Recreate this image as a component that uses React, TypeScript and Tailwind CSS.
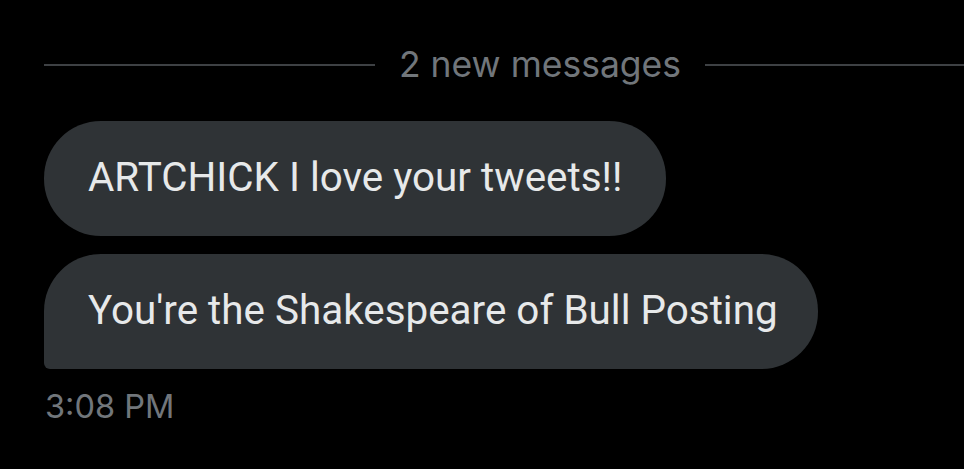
export default function App() {
  return (
    <div className="w-[964px] h-[469px] bg-black overflow-hidden" style={{ fontFamily: "Roboto, 'Liberation Sans', sans-serif" }}>
      <div className="flex items-center ml-[44px] w-[992px] pt-[42px] h-[46px] box-content">
        <div className="flex-1 h-[2px] bg-[#3e4144]" />
        <div className="px-[24px] text-[35.5px] leading-[46px] text-[#71767b] font-['Inter',sans-serif]">2 new messages</div>
        <div className="flex-1 h-[2px] bg-[#3e4144]" />
      </div>
      <div className="flex flex-col items-start pl-[44px] pt-[33px] gap-[18px]">
        <div className="h-[115px] flex items-center px-[44px] bg-[#2f3336] rounded-[57px] text-[#e7e9ea] text-[40.4px]">
          ARTCHICK I love your tweets!!
        </div>
        <div className="h-[115px] flex items-center pl-[44px] pr-[40px] bg-[#2f3336] rounded-[57px] rounded-bl-[6px] text-[#e7e9ea] text-[40.4px]">
          You're the Shakespeare of Bull Posting
        </div>
      </div>
      <div className="pl-[45px] pt-[19px] text-[32.5px] leading-[38px] text-[#71767b] font-['Inter',sans-serif]">3:08 PM</div>
    </div>
  );
}
